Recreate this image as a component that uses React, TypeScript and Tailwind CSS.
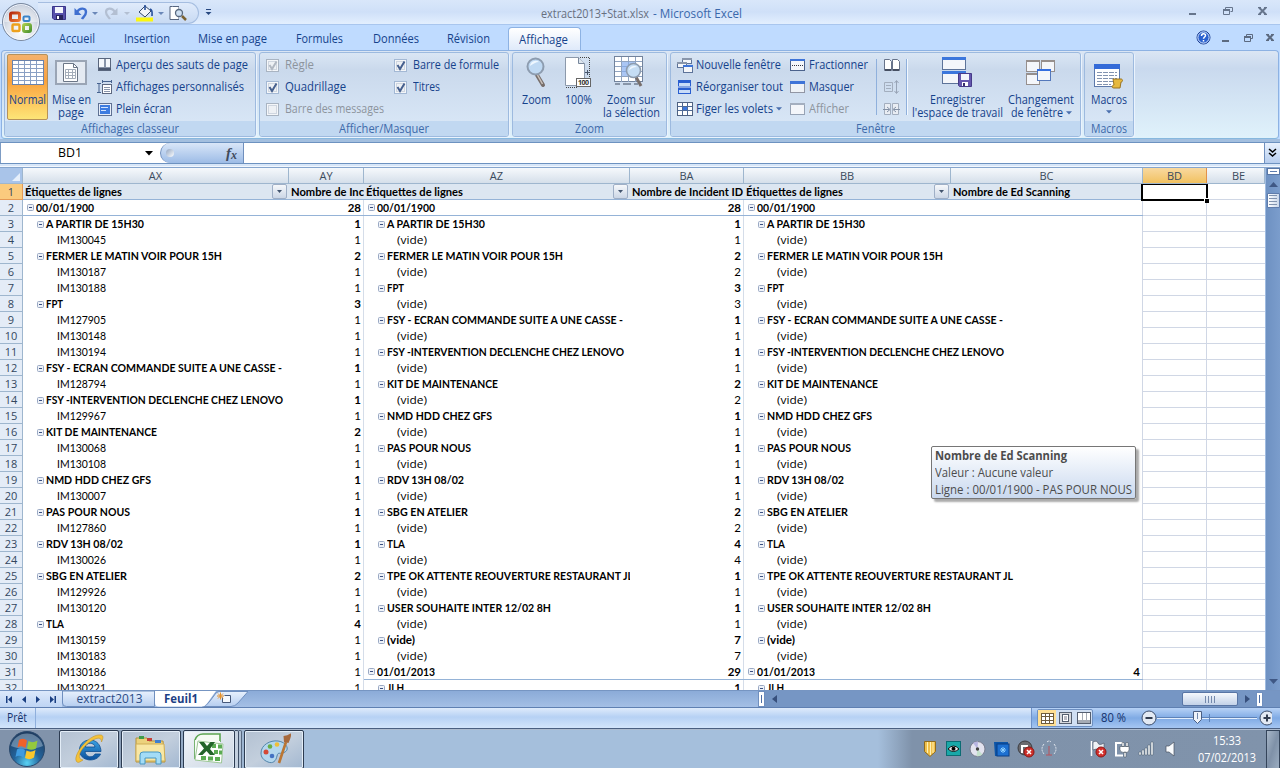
import { useLayoutEffect, useRef, useState } from "react";
import type { ReactNode } from "react";

/* Text set to a given advance width, squeezing or widening the glyphs evenly. */
function Fit({ w, children, className = "" }: { w: number; children: string; className?: string }) {
  const ref = useRef<HTMLSpanElement>(null);
  const [scale, setScale] = useState(1);
  useLayoutEffect(() => {
    if (ref.current && ref.current.offsetWidth) {
      const current = ref.current.getBoundingClientRect().width / scale;
      setScale(w / current);
    }
  }, [w, children]);
  return (
    <span className={"inline-block shrink-0 whitespace-pre " + className} style={{ width: w }}>
      <span ref={ref} className="inline-block origin-left" style={{ transform: `scaleX(${scale})` }}>
        {children}
      </span>
    </span>
  );
}

const Caret = ({ className = "" }: { className?: string }) => (
  <svg width="6" height="4" className={"shrink-0 " + className}>
    <path d="M0 .3h6L3 3.6z" fill="#4a6fae" />
  </svg>
);

function Floppy() {
  return (
    <svg width="14" height="14" viewBox="0 0 14 14">
      <path d="M.5.5h13v13H2L.5 12z" fill="#5650ab" stroke="#39358a" />
      <rect x="3" y="1" width="8" height="6" fill="#f3f5fc" />
      <rect x="4" y="9" width="7" height="5" fill="#27245e" />
      <rect x="5" y="10" width="2" height="3" fill="#fff" />
    </svg>
  );
}

function OfficeOrb() {
  return (
    <svg width="42" height="42" viewBox="0 0 42 42">
      <defs>
        <radialGradient id="orb" cx=".5" cy=".75" r=".75">
          <stop offset="0" stopColor="#ffffff" />
          <stop offset=".5" stopColor="#dfe3ea" />
          <stop offset="1" stopColor="#a3b0c6" />
        </radialGradient>
        <linearGradient id="orbRed" x2="1" y2="1"><stop offset="0" stopColor="#b52a10" /><stop offset="1" stopColor="#ee7a30" /></linearGradient>
        <linearGradient id="orbGreen" x2="1" y2="1"><stop offset="0" stopColor="#a5cb4c" /><stop offset="1" stopColor="#4f9632" /></linearGradient>
      </defs>
      <circle cx="21" cy="21" r="18.500" fill="url(#orb)" stroke="#7a899f" />
      <circle cx="21" cy="21" r="17.300" fill="none" stroke="#f6f9ff" />
      <path d="M4.500 21a16.500 16.500 0 0 1 33 0z" fill="#fff" opacity=".4" />
      <g fill="none" strokeLinejoin="round">
        <rect x="10.500" y="12" width="9" height="7.500" rx="1.500" stroke="url(#orbRed)" strokeWidth="3" />
        <rect x="23.500" y="15.500" width="6" height="4.500" rx="1" stroke="#3a84c9" strokeWidth="2" />
        <rect x="12.500" y="23.500" width="7" height="6.500" rx="1" stroke="#eda11c" strokeWidth="2.400" />
        <rect x="23.500" y="23.500" width="7" height="7" rx="1.500" stroke="url(#orbGreen)" strokeWidth="3" />
      </g>
    </svg>
  );
}

function WinIcons() {
  return (
    <svg width="80" height="13" viewBox="0 0 80 13" className="shrink-0">
      <g stroke="#66758c" fill="none">
        <path d="M1 8h7" strokeWidth="2" />
        <g transform="translate(-1 -1)">
          <path d="M38.500 4.500V2.500h7v4h-2" />
          <path d="M36 5h7" strokeWidth="2" />
          <path d="M36.500 4.500h6v5h-6z" />
        </g>
        <path d="M71 1.500l7 7M78 1.500l-7 7" strokeWidth="2" />
        <path d="M70 1.500h3M76 1.500h3M70 8.500h3M76 8.500h3" />
      </g>
    </svg>
  );
}

function DocIcons() {
  return (
    <svg width="56" height="12" viewBox="0 0 56 12" className="shrink-0">
      <g stroke="#5c6a80" fill="none">
        <path d="M2 9h7" strokeWidth="2" />
        <path d="M26.500 4.500V2.500h6v4h-2" />
        <path d="M24 5h7" strokeWidth="2" />
        <path d="M24.500 4.500h6v5h-6z" />
        <path d="M47 2.500l6 6M53 2.500l-6 6" strokeWidth="2" />
        <path d="M46 2.500h3M51 2.500h3M46 8.500h3M51 8.500h3" />
      </g>
    </svg>
  );
}

function TitleBar() {
  return (
    <div className="flex h-[24px] w-full items-start bg-gradient-to-b from-[#d9e7fa] via-[#cfe0f8] to-[#e3effe]">
      <div className="ml-[38px] mt-[2px] flex h-[22px] w-[161px] items-center rounded-r-full border border-l-0 border-[#a5bde0] bg-gradient-to-b from-[#e0ebfb] to-[#c8daf3] pl-[14px]">
        <Floppy />
        <svg width="106" height="18" viewBox="0 0 106 18" className="ml-[7px]">
          <path d="M4 8c3-5 9-4 9 0s-3 5-4 7" fill="none" stroke="#3f6fd0" strokeWidth="2.400" />
          <path d="M1.500 4v7h7z" fill="#3f6fd0" />
          <path d="M19 8h6l-3 3z" fill="#6a87b8" />
          <path d="M42 8c-3-5-9-4-9 0s3 5 4 7" fill="none" stroke="#b3bfd2" strokeWidth="2.200" />
          <path d="M44.500 4v7h-7z" fill="#b3bfd2" />
          <path d="M51 8h6l-3 3z" fill="#b3bfd2" />
          <rect x="63" y="13.500" width="17" height="4" fill="#fbf70e" />
          <path d="M66 8l6-6 6 5-6 6z" fill="#f2f5fa" stroke="#35496b" />
          <path d="M72 6V1M77 5c3 1 2 4 2 7" fill="none" stroke="#27509b" strokeWidth="1.600" />
          <path d="M85 8h6l-3 3z" fill="#6a87b8" />
          <path d="M99.500 2.500h6.500v13h-9v-13z" fill="#fff" stroke="#56657f" />
        </svg>
        <svg width="14" height="18" viewBox="0 0 14 18" className="-ml-[5px]">
          <circle cx="5" cy="9" r="3.500" fill="#cfe0f2" stroke="#59697f" strokeWidth="1.300" />
          <path d="M8 12l4 4" stroke="#7a6233" strokeWidth="2.500" />
        </svg>
      </div>
      <svg width="7" height="10" className="ml-[6px] mt-[9px]">
        <path d="M1 .5h5" stroke="#274880" />
        <path d="M.5 3h6L3.500 6z" fill="#274880" />
      </svg>
      <div className="ml-[329px] mt-[5px] flex h-[18px] items-center text-[12px] leading-none">
        <Fit w={108} className="text-[#68707f]">extract2013+Stat.xlsx</Fit>
        <Fit w={89} className="ml-[4px] text-[#3a68ab]">- Microsoft Excel</Fit>
      </div>
      <div className="ml-auto mr-[12px] mt-[6px]"><WinIcons /></div>
    </div>
  );
}

const tabs: [string, number, string][] = [
  ["Accueil", 36, "ml-[59px]"],
  ["Insertion", 46, "ml-[29px]"],
  ["Mise en page", 69, "ml-[28px]"],
  ["Formules", 47, "ml-[29px]"],
  ["Données", 46, "ml-[30px]"],
  ["Révision", 43, "ml-[28px]"],
];

function TabBar() {
  return (
    <div className="flex h-[26px] w-full items-start border-t border-[#a9c6ee] bg-[#bfdbff] text-[12px] leading-[28px] text-[#15428b]">
      {tabs.map(([t, w, m]) => (
        <Fit key={t} w={w} className={m}>{t}</Fit>
      ))}
      <div className="ml-[18px] mt-[2px] flex h-[23px] w-[73px] rounded-t-[4px] border border-b-0 border-[#8db2e3] bg-gradient-to-b from-white to-[#dfeafa] pl-[10px] leading-[23px]">
        <Fit w={49}>Affichage</Fit>
      </div>
      <div className="ml-auto mr-[4px] flex items-center pt-[5px]">
        <svg width="15" height="15" viewBox="0 0 15 15" className="mr-[9px]">
          <circle cx="7.500" cy="7.500" r="6.500" fill="#2b61cf" stroke="#1c3f94" />
          <circle cx="7.500" cy="7.500" r="5.600" fill="none" stroke="#d5e5fb" />
          <path d="M5.500 6c0-3 4-3 4-.6 0 1.600-2 1.600-2 3.400M7.500 10v1.500" fill="none" stroke="#fff" strokeWidth="1.500" />
        </svg>
        <DocIcons />
      </div>
    </div>
  );
}

function Group({ label, lw, className, children }: { label: string; lw: number; className: string; children: ReactNode }) {
  return (
    <div className={"flex h-[85px] shrink-0 flex-col overflow-hidden rounded-[3px] border border-[#9dbadf] bg-gradient-to-b from-[#dae6f4] via-[#cad9ec] via-20% to-[#dbe9f8] shadow-[1px_1px_0_#eaf3fd] " + className}>
      <div className="flex h-[68px] shrink-0 items-start">{children}</div>
      <div className="flex h-[15px] items-center justify-center bg-[#c1d8f1] text-[12px] leading-none text-[#3e6aaa]">
        <Fit w={lw}>{label}</Fit>
      </div>
    </div>
  );
}

function Big({ icon, lines, className, caret }: { icon: ReactNode; lines: [string, number][]; className: string; caret?: "inline" | "below" }) {
  return (
    <div className={"mt-[1px] flex h-[66px] shrink-0 flex-col items-center text-[12px] text-[#15428b] " + className}>
      <div className="flex h-[39px] shrink-0 items-center pb-[3px]">{icon}</div>
      {lines.map(([t, w], i) => (
        <div key={t} className="flex h-[13px] shrink-0 items-center leading-[13px]">
          <Fit w={w}>{t}</Fit>
          {caret === "inline" && i === lines.length - 1 && <Caret className="ml-[3px]" />}
        </div>
      ))}
      {caret === "below" && <Caret className="mt-[4px]" />}
    </div>
  );
}

function Small({ icon, label, w, dim, caret }: { icon: ReactNode; label: string; w: number; dim?: boolean; caret?: boolean }) {
  return (
    <div className="flex h-[22px] items-center text-[12px] leading-none">
      {icon}
      <Fit w={w} className={dim ? "text-[#8d949d]" : "text-[#15428b]"}>{label}</Fit>
      {caret && <Caret className="ml-[3px]" />}
    </div>
  );
}

function Check({ label, w, on, dim }: { label: string; w: number; on?: boolean; dim?: boolean }) {
  return (
    <Small
      label={label}
      w={w}
      dim={dim}
      icon={
        <svg width="13" height="13" className="mr-[6px] shrink-0">
          <rect x=".5" y=".5" width="12" height="12" fill="#f4f6f9" stroke={dim ? "#a9b4c2" : "#a3b8d4"} />
          <rect x="2.500" y="2.500" width="8" height="8" fill="#eef1f5" stroke="#cfd6e0" />
          {on && <path d="M3.500 6l2.500 4 4.500-7.500" fill="none" stroke={dim ? "#b1b8c2" : "#46608f"} strokeWidth="2" />}
        </svg>
      }
    />
  );
}

function NormalIcon() {
  return (
    <svg width="32" height="25">
      <rect x=".5" y=".5" width="31" height="24" fill="#fff" stroke="#6a83ad" />
      <path d="M1 4.500h30M1 8.500h30M1 12.500h30M1 16.500h30M1 20.500h30M6.500 1v23M12.500 1v23M18.500 1v23M24.500 1v23" stroke="#8aa0c4" />
    </svg>
  );
}

function PageLayoutIcon() {
  return (
    <svg width="32" height="25">
      <rect x="1" y="1" width="30" height="23" fill="#e4eaf2" stroke="#9aa5b5" strokeWidth="2" />
      <path d="M8.500 3.500h10l4 4v14h-14z" fill="#fff" stroke="#6b7686" />
      <path d="M18.500 3.500v4h4" fill="none" stroke="#6b7686" />
      <path d="M10.500 9.500h10v9h-10zM10 12.500h11M10 15.500h11M13.500 9v9M17.500 9v9" fill="none" stroke="#a4adb9" />
    </svg>
  );
}

function ZoomIcon() {
  return (
    <svg width="20" height="31">
      <path d="M11 18l6 10" stroke="#776e6b" strokeWidth="4" strokeLinecap="round" />
      <path d="M11.500 18l5 9" stroke="#cbc3bd" strokeWidth="1.500" />
      <circle cx="9.500" cy="9.500" r="8" fill="#bfd9f3" stroke="#8d9caf" strokeWidth="2" />
      <path d="M4 9a5.500 5.500 0 0 1 9-4c-3 0-6 2-9 4z" fill="#eef7ff" />
    </svg>
  );
}

function HundredIcon() {
  return (
    <svg width="26" height="31" viewBox="0 0 26 31">
      <path d="M.5.5h13l6 6v22H.5z" fill="#fff" stroke="#8c99ab" />
      <path d="M13.500.5v6h6" fill="#dde5ee" stroke="#77869b" />
      <path d="M15 .5h9.500V21M1 30.500h11" fill="none" stroke="#444" strokeDasharray="1 1" />
      <path d="M20 15.500h5M22.500 13v5" stroke="#4a566a" />
      <rect x="11.500" y="21.500" width="14" height="8" fill="#fff" stroke="#666" />
      <text x="13" y="28.300" fontSize="7" fontWeight="700" textLength="11" fill="#333">100</text>
    </svg>
  );
}

function ZoomSelIcon() {
  return (
    <svg width="30" height="32" viewBox="0 0 30 32">
      <rect x=".5" y=".5" width="28" height="25" fill="#fff" stroke="#72839c" />
      <path d="M1 5.500h27M1 10.500h27M1 15.500h27M1 20.500h27M7.500 1v25M14.500 1v25M21.500 1v25" stroke="#8fa3c0" />
      <rect x="8" y="6" width="13" height="14" fill="#86aef0" opacity=".7" />
      <path d="M1 28h5M9 28h8M20 28h4" stroke="#8895a8" strokeWidth="2" />
      <path d="M22 21l5 9" stroke="#776e6b" strokeWidth="3" />
      <circle cx="19.500" cy="14.500" r="7" fill="#c5ddf4" stroke="#8d9caf" strokeWidth="1.600" />
      <path d="M15 14a5 5 0 0 1 8-3c-3 0-5 1-8 3z" fill="#f1f8ff" />
    </svg>
  );
}

/* One small framed window with a coloured caption. */
const Win = ({ x, y, w, h, c = "#3e74d8", f = "#f4f6fa", s = "#5d7399" }: { x: number; y: number; w: number; h: number; c?: string; f?: string; s?: string }) => (
  <g>
    <rect x={x + 0.5} y={y + 0.5} width={w - 1} height={h - 1} fill={f} stroke={s} />
    <rect x={x} y={y} width={w} height={Math.max(2, Math.round(h / 5))} fill={c} />
  </g>
);

function Ribbon() {
  return (
    <div className="flex h-[89px] w-full items-start bg-[#bfdbff] px-[1px]">
      <div className="flex h-[89px] w-full items-start rounded-[4px] border border-[#8db2e3] border-b-[#87b8de] bg-gradient-to-b from-[#dbe6f4] via-[#c9d9ee] via-20% to-[#e0f2fb] pl-[2px] pt-[1px]">
        <Group label="Affichages classeur" lw={98} className="w-[252px]">
          <Big
            className="ml-[2px] w-[41px] rounded-[2px] border border-[#b6915a] bg-gradient-to-b from-[#f3b16c] via-[#f9a13c] via-40% to-[#fde577] [&>div:first-child]:h-[38px]"
            icon={<NormalIcon />}
            lines={[["Normal", 37]]}
          />
          <Big className="ml-[2px] w-[42px]" icon={<PageLayoutIcon />} lines={[["Mise en", 39], ["page", 26]]} />
          <div className="ml-[6px] mt-[1px]">
            <Small w={132} label="Aperçu des sauts de page" icon={
              <svg width="14" height="14" className="mr-[4px]">
                <rect x=".5" y=".5" width="12" height="12" fill="#8894a8" stroke="#59667d" />
                <path d="M1 1h5v8H1zM8 1h4v8H8z" fill="#f4f7fb" />
                <path d="M1 11h12" stroke="#4c5971" strokeWidth="2" />
              </svg>} />
            <Small w={128} label="Affichages personnalisés" icon={
              <svg width="16" height="15" className="-ml-[1px] mr-[3px]">
                <path d="M0 3.500h4M0 12.500h4M2 3v10M5 1.500h10M5.500 0v3M14.500 0v3" stroke="#47638f" />
                <rect x="5.500" y="4.500" width="9" height="9" fill="#fff" stroke="#5d6880" />
                <path d="M7 7.500h6M7 9.500h6M7 11.500h6" stroke="#8894aa" />
              </svg>} />
            <Small w={56} label="Plein écran" icon={
              <svg width="14" height="13" className="mr-[4px]">
                <rect x=".5" y=".5" width="13" height="12" fill="#e8effa" stroke="#5f7193" />
                <rect x="2" y="2" width="10" height="9" fill="#3d7ce0" />
                <path d="M3 4.500h7M3 7.500h5" stroke="#d2e4ff" />
              </svg>} />
          </div>
        </Group>

        <Group label="Afficher/Masquer" lw={90} className="ml-[3px] w-[250px]">
          <div className="ml-[6px] mt-[1px] w-[128px]">
            <Check label="Règle" w={29} on dim />
            <Check label="Quadrillage" w={61} on />
            <Check label="Barre des messages" w={99} dim />
          </div>
          <div className="mt-[1px]">
            <Check label="Barre de formule" w={86} on />
            <Check label="Titres" w={27} on />
          </div>
        </Group>

        <Group label="Zoom" lw={29} className="ml-[3px] w-[155px]">
          <Big className="ml-[4px] w-[38px]" icon={<ZoomIcon />} lines={[["Zoom", 29]]} />
          <Big className="ml-[4px] w-[38px]" icon={<HundredIcon />} lines={[["100%", 27]]} />
          <Big className="ml-[4px] w-[60px] [&>div:first-child]:-ml-[4px]" icon={<ZoomSelIcon />} lines={[["Zoom sur", 48], ["la sélection", 57]]} />
        </Group>

        <Group label="Fenêtre" lw={39} className="ml-[3px] w-[411px]">
          <div className="ml-[6px] mt-[1px] w-[113px]">
            <Small w={85} label="Nouvelle fenêtre" icon={
              <svg width="16" height="15" className="mr-[3px]">
                <Win x={5} y={0} w={10} h={6} c="#8996ab" />
                <Win x={0} y={4} w={10} h={6} c="#8996ab" />
                <Win x={6} y={7} w={10} h={8} />
              </svg>} />
            <Small w={87} label="Réorganiser tout" icon={
              <svg width="14" height="14" className="ml-[1px] mr-[4px]">
                <rect width="13" height="14" fill="#2a5ed0" />
                <path d="M1 3h11v3H1zM1 10h11v3H1z" fill="#c9dcf8" />
                <path d="M0 7h13" stroke="#dfe9f7" />
              </svg>} />
            <Small w={77} label="Figer les volets" caret icon={
              <svg width="16" height="14" className="mr-[3px]">
                <rect x=".5" y=".5" width="15" height="13" fill="#fff" stroke="#4f6282" />
                <path d="M1 4.500h14M1 8.500h14M5.500 1v12M10.500 1v12" stroke="#4f6a96" />
                <path d="M6 5h4v3H6z" fill="#3a76dc" />
              </svg>} />
          </div>
          <div className="mt-[1px] w-[86px]">
            <Small w={59} label="Fractionner" icon={
              <svg width="15" height="12" className="mr-[4px]"><Win x={0} y={0} w={15} h={12} s="#4b628c" /><path d="M2 6.500h11" stroke="#334" strokeDasharray="1 1" /></svg>} />
            <Small w={45} label="Masquer" icon={
              <svg width="15" height="12" className="mr-[4px]"><rect x=".5" y=".5" width="14" height="11" fill="#eef2f7" stroke="#445" strokeDasharray="1 1" /><path d="M0 1.500h15" stroke="#3e74d8" strokeWidth="3" /></svg>} />
            <Small w={40} dim label="Afficher" icon={
              <svg width="15" height="12" className="mr-[4px]"><Win x={0} y={0} w={15} h={12} c="#a4afbf" s="#97a3b5" /></svg>} />
          </div>
          <div className="mt-[6px] flex h-[56px] w-[31px] justify-center border-x border-[#8fb0dc] shadow-[1px_0_0_#f2f8ff]">
            <svg width="17" height="56">
              <path d="M1.500.5h5l2 2v9h-7zM9.500.5h5l2 2v9h-7z" fill="#fff" stroke="#67738a" />
              <path d="M2 11h6M10 11h6" stroke="#464f62" strokeWidth="2" />
              <path d="M1.500 23.500h8v9h-8zM3 26.500h5M3 29.500h5" fill="none" stroke="#a3aebe" />
              <path d="M13.500 22v12M11.500 24l2-2.500 2 2.500M11.500 32l2 2.500 2-2.500" fill="none" stroke="#98a4b6" />
              <path d="M1.500 44.500h6v11h-6zM9.500 44.500h6v11h-6z" fill="#e9edf3" stroke="#a3aebe" />
              <path d="M0 50.500h6M4 48l3 2.500L4 53M17 50.500h-6M13 48l-3 2.500 3 2.500" fill="none" stroke="#8391a6" />
            </svg>
          </div>
          <Big className="ml-[2px] w-[96px]" lines={[["Enregistrer", 55], ["l'espace de travail", 91]]} icon={
            <svg width="30" height="31">
              <Win x={0} y={0} w={24} h={13} c="#3c77dc" />
              <Win x={0} y={14} w={24} h={13} c="#3c77dc" />
              <path d="M16.500 16.500h13v13h-12l-1-1z" fill="#6557ae" stroke="#463a88" />
              <path d="M19 17h8v6h-8z" fill="#f2f4fb" />
              <path d="M20 25h6v4h-6z" fill="#fff" /><path d="M21 26h2v3h-2z" fill="#39306f" />
            </svg>} />
          <Big className="w-[72px] [&>div:first-child]:pb-0" caret="inline" lines={[["Changement", 66], ["de fenêtre", 52]]} icon={
            <svg width="30" height="27">
              <Win x={0} y={0} w={14} h={12} c="#968f8d" s="#968f8d" />
              <Win x={15} y={0} w={14} h={12} c="#968f8d" s="#968f8d" />
              <Win x={0} y={13} w={14} h={12} c="#968f8d" s="#968f8d" />
              <Win x={11} y={9} w={14} h={12} c="#356fe0" s="#5478bb" />
            </svg>} />
        </Group>

        <Group label="Macros" lw={36} className="ml-[3px] w-[50px]">
          <Big className="w-[48px] [&>div:first-child]:pb-0 [&>div:first-child]:pt-[6px]" caret="below" lines={[["Macros", 36]]} icon={
            <svg width="30" height="26">
              <rect x=".5" y=".5" width="25" height="22" fill="#fff" stroke="#5c79ab" />
              <rect width="26" height="5" fill="#346bd8" />
              <path d="M3 8.500h20M3 11.500h20M3 14.500h20M3 17.500h20M3 20.500h14" stroke="#8293b0" strokeDasharray="5 1" />
              <path d="M19 15h8c2 0 2 3 0 3l-1 6h-6c-3 0-2-3 0-3z" fill="#e6b93e" stroke="#9b7420" />
            </svg>} />
        </Group>
      </div>
    </div>
  );
}

function FormulaBar() {
  return (
    <div className="flex h-[29px] w-full flex-col border-t-[3px] border-[#a3bfdf] bg-[#d7e6f8]">
      <div className="flex h-[22px] w-full items-stretch border-y border-[#6d92c0] bg-white">
        <div className="flex w-[160px] items-center border-l border-[#7d9cc4] bg-white pl-[57px] text-[12px] text-black">
          <Fit w={24}>BD1</Fit>
          <svg width="8" height="5" className="ml-[63px]"><path d="M0 0h8L4 4.500z" fill="#000" /></svg>
        </div>
        <div className="flex w-[84px] items-center rounded-l-full border border-y-0 border-[#6f8fbd] bg-gradient-to-b from-[#d9e6f8] to-[#9dbce6] pl-[5px]">
          <span className="h-[8px] w-[8px] rounded-full bg-gradient-to-br from-[#93a6c2] to-white" />
          <span className="ml-[52px] font-['Liberation_Serif'] text-[15px] font-bold italic leading-none text-[#414b5c]">f</span>
          <span className="mt-[3px] font-['Liberation_Serif'] text-[12px] font-bold italic leading-none text-[#414b5c]">x</span>
        </div>
        <div className="flex-1" />
        <div className="flex w-[16px] items-center justify-center border-l border-[#6f8fbd] bg-gradient-to-b from-[#e9f2fe] to-[#b6cdee]">
          <svg width="9" height="10"><path d="M1 1l3.500 3L8 1M1 5l3.500 3L8 5" fill="none" stroke="#000" strokeWidth="1.500" /></svg>
        </div>
      </div>
      <div className="h-[2px]" />
      <div className="h-px bg-[#f2f7fd]" />
      <div className="h-px bg-[#86a5cd]" />
    </div>
  );
}

type Line = { level: 0 | 1 | 2; text: string; n?: number };
const W: Record<string, number> = {
  "00/01/1900": 58, "01/01/2013": 58, "A PARTIR DE 15H30": 98, "FERMER LE MATIN VOIR POUR 15H": 176, FPT: 17,
  "FSY - ECRAN COMMANDE SUITE A UNE CASSE -": 236, "FSY -INTERVENTION DECLENCHE CHEZ LENOVO": 237,
  "KIT DE MAINTENANCE": 111, "NMD HDD CHEZ GFS": 105, "PAS POUR NOUS": 84, "RDV 13H 08/02": 77,
  "SBG EN ATELIER": 81, TLA: 18, "TPE OK ATTENTE REOUVERTURE RESTAURANT JL": 246,
  "USER SOUHAITE INTER 12/02 8H": 164, JLH: 17,
};

const g = (text: string, n?: number): Line => ({ level: 1, text, n });
const i = (text: string, n?: number): Line => ({ level: 2, text, n });

const left: Line[] = [
  { level: 0, text: "00/01/1900", n: 28 },
  g("A PARTIR DE 15H30", 1), i("IM130045", 1),
  g("FERMER LE MATIN VOIR POUR 15H", 2), i("IM130187", 1), i("IM130188", 1),
  g("FPT", 3), i("IM127905", 1), i("IM130148", 1), i("IM130194", 1),
  g("FSY - ECRAN COMMANDE SUITE A UNE CASSE -", 1), i("IM128794", 1),
  g("FSY -INTERVENTION DECLENCHE CHEZ LENOVO", 1), i("IM129967", 1),
  g("KIT DE MAINTENANCE", 2), i("IM130068", 1), i("IM130108", 1),
  g("NMD HDD CHEZ GFS", 1), i("IM130007", 1),
  g("PAS POUR NOUS", 1), i("IM127860", 1),
  g("RDV 13H 08/02", 1), i("IM130026", 1),
  g("SBG EN ATELIER", 2), i("IM129926", 1), i("IM130120", 1),
  g("TLA", 4), i("IM130159", 1), i("IM130183", 1), i("IM130186", 1), i("IM130221", 1),
];

const groups: [string, number][] = [
  ["A PARTIR DE 15H30", 1], ["FERMER LE MATIN VOIR POUR 15H", 2], ["FPT", 3],
  ["FSY - ECRAN COMMANDE SUITE A UNE CASSE -", 1], ["FSY -INTERVENTION DECLENCHE CHEZ LENOVO", 1],
  ["KIT DE MAINTENANCE", 2], ["NMD HDD CHEZ GFS", 1], ["PAS POUR NOUS", 1], ["RDV 13H 08/02", 1],
  ["SBG EN ATELIER", 2], ["TLA", 4], ["TPE OK ATTENTE REOUVERTURE RESTAURANT JL", 1],
  ["USER SOUHAITE INTER 12/02 8H", 1], ["(vide)", 7],
];

const middle: Line[] = [
  { level: 0, text: "00/01/1900", n: 28 },
  ...groups.flatMap(([t, n]) => [g(t, n), i("(vide)", n)]),
  { level: 0, text: "01/01/2013", n: 29 },
  g("JLH", 1),
];

const right: Line[] = middle.map((l) => ({ ...l, n: l.text === "01/01/2013" ? 4 : undefined }));

const widthOf = (l: Line) => (l.text === "(vide)" ? (l.level === 2 ? 30 : 28) : (W[l.text] ?? 49));

function Minus() {
  return (
    <svg width="7" height="7" className="mr-[2px] shrink-0">
      <rect x=".5" y=".5" width="6" height="6" rx="1" fill="#eef2f8" stroke="#9aa9c4" />
      <path d="M2 3.500h3" stroke="#3a4f80" />
    </svg>
  );
}

function Pivot({ lines, count, labelW, valueW, countW, edge, spill }: { lines: Line[]; count: string; labelW: string; valueW: string; countW: number; edge: string; spill?: boolean }) {
  return (
    <div className="flex shrink-0 flex-col">
      <div className="flex h-[16px] border-b border-[#95b3d7] bg-[#dce6f1] font-bold">
        <div className={"flex items-center overflow-hidden pl-[2px] " + labelW}>
          <Fit w={97}>Étiquettes de lignes</Fit>
          <span className="ml-auto mr-[2px] flex h-[15px] w-[15px] shrink-0 items-center justify-center rounded-[2px] border border-[#9fafc6] bg-gradient-to-b from-[#f6f8fb] to-[#ccd7e6]">
            <svg width="5" height="3"><path d="M0 0h5L2.500 3z" fill="#42546e" /></svg>
          </span>
        </div>
        <div className={"flex items-center overflow-hidden pl-[2px] " + valueW}>
          <Fit w={countW}>{count}</Fit>
        </div>
      </div>
      {lines.map((l, k) => (
        <div key={k} className={"flex h-[16px] shrink-0 " + (l.level === 0 ? "border-b border-[#95b3d7] " : "") + (l.level < 2 ? "font-bold" : "")}>
          <div className={"flex items-center " + (spill ? "" : "overflow-hidden ") + labelW + (l.level === 0 ? " pl-[4px]" : l.level === 1 ? " pl-[14px]" : l.text === "(vide)" ? " pl-[33px]" : " pl-[34px]")}>
            {l.level < 2 && <Minus />}
            <Fit w={widthOf(l)} className={l.text === "(vide)" && l.level === 2 ? "font-['Open_Sans'] text-[11px]" : ""}>{l.text}</Fit>
          </div>
          <div className={"flex items-center justify-end pr-[2px] " + valueW + " " + edge}>{l.n}</div>
        </div>
      ))}
    </div>
  );
}

const heads: [string, string][] = [
  ["AX", "w-[266px]"], ["AY", "w-[75px]"], ["AZ", "w-[266px]"], ["BA", "w-[114px]"],
  ["BB", "w-[207px]"], ["BC", "w-[192px]"], ["BD", "w-[64px]"], ["BE", "w-[58px]"],
];

function Sheet() {
  return (
    <div className="flex h-[522px] w-full overflow-hidden bg-white">
      <div className="flex w-[1265px] shrink-0 flex-col overflow-hidden">
        <div className="flex h-[16px] shrink-0 border-b border-[#9eb6ce] text-[11px] leading-[15px] text-[#3b4a5c]">
          <div className="flex w-[23px] items-end justify-end border-r border-[#9eb6ce] bg-[#a9c4e9] p-[2px]">
            <svg width="8" height="8"><path d="M8 0v8H0z" fill="#e6effb" /></svg>
          </div>
          {heads.map(([h, w]) => (
            <div key={h} className={"border-r text-center " + w + (h === "BD" ? " border-[#e2914a] bg-gradient-to-b from-[#f9d99f] to-[#f1c15f]" : h === "BE" ? " border-[#9eb6ce] bg-gradient-to-b from-[#f6f9fc] to-[#d5dfea] pl-[6px]" : " border-[#9eb6ce] bg-gradient-to-b from-[#f6f9fc] to-[#d5dfea]")}>{h}</div>
          ))}
        </div>
        <div className="flex h-[506px] shrink-0 overflow-hidden font-['Lato'] text-[11.500px] leading-[16px] text-black">
          <div className="w-[23px] shrink-0 font-['Open_Sans'] text-[11px] text-[#33475e]">
            {Array.from({ length: 32 }, (_, k) => (
              <div key={k} className={"h-[16px] border-b border-r text-center leading-[15px] " + (k === 0 ? "border-[#e59a55] bg-[#fbcb7e]" : "border-[#9eb6ce] bg-[#e4ecf7]")}>{k + 1}</div>
            ))}
          </div>
          <Pivot lines={left} count="Nombre de Incident ID" countW={113} labelW="w-[266px]" valueW="w-[75px]" edge="border-r border-[#d5dde9]" />
          <Pivot lines={middle} count="Nombre de Incident ID" countW={111} labelW="w-[266px]" valueW="w-[114px]" edge="border-r border-[#d5dde9]" />
          <Pivot lines={right} count="Nombre de Ed Scanning" countW={117} labelW="w-[207px]" valueW="w-[192px]" edge="border-r border-[#d0d7e5]" spill />
          <div className="w-[122px] shrink-0">
            {Array.from({ length: 32 }, (_, k) => (
              <div key={k} className="flex h-[16px]">
                {k === 0 ? (
                  <div className="relative z-10 -ml-[2px] -mt-px h-[18px] w-[67px] shrink-0 border-2 border-black">
                    <span className="absolute -bottom-[4px] -right-[3px] h-[5px] w-[5px] border-l border-t border-white bg-black" />
                  </div>
                ) : (
                  <div className="w-[64px] border-b border-r border-[#d0d7e5]" />
                )}
                <div className="flex-1 border-b border-[#d0d7e5]" />
              </div>
            ))}
          </div>
        </div>
      </div>
      <div className="flex w-[15px] flex-col items-center border-l border-[#9fbbe0] bg-gradient-to-r from-[#6e91c2] to-[#7b9dcc]">
        <div className="flex h-[7px] w-[13px] items-center border border-[#5876a5] bg-white px-[2px]"><span className="h-px w-full bg-[#5e7daf]" /></div>
        <svg width="9" height="5" className="mt-[7px]"><path d="M0 5h9L4.500 0z" fill="#3f5885" /></svg>
        <div className="mt-[6px] flex h-[15px] w-[13px] flex-col items-center justify-center gap-px rounded-[1px] border border-[#5f7cab] bg-gradient-to-r from-white to-[#cbd8ea]">
          {[0, 1, 2, 3].map((k) => <span key={k} className="mb-px h-px w-[8px] bg-[#8193ae]" />)}
        </div>
        <svg width="9" height="5" className="mb-[6px] mt-auto"><path d="M0 0h9L4.500 5z" fill="#3f5885" /></svg>
      </div>
    </div>
  );
}

function SheetTabs() {
  return (
    <div className="flex h-[17px] w-full border-t border-[#7695c2] bg-gradient-to-b from-[#8babd8] to-[#a4bfe5]">
      <div className="flex w-[62px] items-center bg-gradient-to-b from-[#dce9fb] to-[#bed4f3]">
        <svg width="62" height="9" fill="#1a3f82">
          <path d="M6 1h1.500v7H6zM12 1v7L8 4.500zM26 1v7l-4-3.500zM36 1v7l4-3.500zM50 1v7l4-3.500zM54.500 1H56v7h-1.500z" />
        </svg>
      </div>
      <svg width="186" height="16" viewBox="0 0 186 16" className="shrink-0">
        <defs>
          <linearGradient id="stab" x2="0" y2="1"><stop offset="0" stopColor="#e8f1fd" /><stop offset="1" stopColor="#b6cef0" /></linearGradient>
        </defs>
        <path d="M140 15.500Q145 15 148 10L154 2Q156 .5 158 .5h28L176 12q-3 3.500-7 3.500z" fill="url(#stab)" stroke="#6f8fbf" />
        <path d="M.500 0V12q0 3.500 4 3.500H92.500V0z" fill="url(#stab)" stroke="#6f8fbf" />
        <path d="M93 0v12q0 3.500 4 3.500h43q3 0 5-3L154 0z" fill="#fff" />
        <path d="M162.500 4.500h6v7h-8v-5" fill="#f6f9fd" stroke="#46597a" />
        <path d="M155 5h7M158.500 1.500v7M156 2.500l5 5M161 2.500l-5 5" stroke="#e79128" />
        <text x="14.500" y="12.300" fontSize="12.500" textLength="66" lengthAdjust="spacingAndGlyphs" fill="#2c4c86">extract2013</text>
        <text x="102" y="12.300" fontSize="12.500" fontWeight="700" textLength="34" lengthAdjust="spacingAndGlyphs" fill="#1c3f84">Feuil1</text>
      </svg>
      <div className="ml-[510px] flex h-[16px] w-[7px] items-center justify-center border border-[#6f8fbf] bg-white"><span className="h-[8px] w-px bg-[#4e6ea5]" /></div>
      <div className="flex flex-1 items-center bg-[#7696c4]">
        <svg width="5" height="8" className="ml-[7px]"><path d="M5 0v8L0 4z" fill="#374f7c" /></svg>
        <div className="ml-[405px] flex h-[14px] w-[56px] items-center justify-center gap-[1px] rounded-[2px] border border-[#5875a5] bg-gradient-to-b from-[#f5f8fd] to-[#c3d2e8]">
          {[0, 1, 2, 3].map((k) => <span key={k} className="mr-px h-[7px] w-px bg-[#7489ac]" />)}
        </div>
        <svg width="5" height="8" className="ml-[7px]"><path d="M0 0v8l5-4z" fill="#374f7c" /></svg>
        <div className="ml-[6px] flex h-[15px] w-[7px] items-center justify-center border border-[#6f8fbf] bg-white"><span className="h-[8px] w-px bg-[#4e6ea5]" /></div>
      </div>
    </div>
  );
}

function StatusBar() {
  return (
    <div className="flex h-[22px] w-full items-stretch border-y border-b-[#4a5f80] border-t-[#5f80b2] bg-gradient-to-b from-[#dfebfb] via-[#b6d1f4] via-45% to-[#d3e5fb] text-[12px] leading-none text-[#15326c]">
      <div className="flex w-[36px] items-center border-r border-[#8fafdc] pl-[7px]"><Fit w={20}>Prêt</Fit></div>
      <div className="flex-1" />
      <div className="flex w-[249px] items-center border-l border-[#6f92c8] bg-gradient-to-b from-[#b7d2f6] via-[#7faae4] via-50% to-[#a5c6f2]">
        <div className="ml-[5px] flex h-[18px] w-[56px] items-center rounded-[2px] border border-[#6d8fc1] bg-[#d0dff3]">
          <div className="flex h-full w-[18px] items-center justify-center bg-[#ffdf93]">
            <svg width="13" height="11"><rect x=".5" y=".5" width="12" height="10" fill="#fff" stroke="#6e5c3d" /><path d="M1 3.500h11M1 7.500h11M4.500 1v9M8.500 1v9" stroke="#6e5c3d" /></svg>
          </div>
          <svg width="13" height="12" className="ml-[3px]"><rect x=".5" y=".5" width="12" height="11" fill="#d7d9de" stroke="#555f70" /><rect x="3.500" y="2.500" width="6" height="7" fill="#fff" stroke="#555f70" /><path d="M5 5h3M5 7h3" stroke="#778" /></svg>
          <svg width="14" height="12" className="ml-[5px]"><rect x=".5" y=".5" width="13" height="11" fill="#a5abb5" stroke="#555f70" /><path d="M1 1h4v7H1zM6 1h3v7H6zM10 1h3v7h-3z" fill="#fff" /></svg>
        </div>
        <Fit w={25} className="ml-[8px]">80 %</Fit>
        <svg width="134" height="18" viewBox="0 0 134 18" className="ml-[12px]">
          <path d="M19 9.500h100" stroke="#e3eefc" /><path d="M19 8.500h100M71.500 5v8" stroke="#5d82b8" />
          <circle cx="11" cy="9" r="7" fill="#e2e9f3" stroke="#3c4e6c" /><path d="M7.500 9h7" stroke="#323d50" strokeWidth="2" />
          <circle cx="129" cy="9" r="7" fill="#e2e9f3" stroke="#3c4e6c" /><path d="M125.500 9h7M129 5.500v7" stroke="#323d50" strokeWidth="2" />
          <path d="M55.500 2.500h8v8l-4 4-4-4z" fill="#eef3fa" stroke="#4a5f83" /><path d="M59.500 4v6" stroke="#7188ad" />
        </svg>
      </div>
    </div>
  );
}

function TaskButton({ children, className = "", active }: { children: ReactNode; className?: string; active?: boolean }) {
  return (
    <div className={"flex h-[39px] shrink-0 items-center justify-center rounded-[2px] border border-[#2c3b51] shadow-[inset_0_0_0_1px_#e3edf7] " + (active ? "bg-gradient-to-br from-[#f2f5f9] to-[#cbd6e3] " : "bg-gradient-to-br from-[#b3c1d2] via-[#c3cfdd] to-[#a3b8d1] ") + className}>
      {children}
    </div>
  );
}

function Taskbar() {
  return (
    <div className="flex h-[39px] w-full items-center border-t border-[#aebccf] bg-[linear-gradient(90deg,#8193ab_0,#8193ab_58px,#a5bfdc_300px,#a5bfdc_878px,#7f92aa_912px,#8093ab_100%)]">
      <svg width="40" height="38" viewBox="0 0 40 38" className="ml-[7px] shrink-0">
        <defs>
          <radialGradient id="start" cx=".5" cy=".9" r=".85"><stop offset="0" stopColor="#59d2f4" /><stop offset=".45" stopColor="#23639b" /><stop offset="1" stopColor="#1f3e63" /></radialGradient>
        </defs>
        <circle cx="20" cy="19" r="17.500" fill="url(#start)" stroke="#29486c" />
        <path d="M4 16a16.500 16.500 0 0 1 32 0c-9 4-23 4-32 0z" fill="#c8dcea" opacity=".4" />
        <path d="M12 10q4.500-2.500 8 .5L18.500 18q-4-3-8-.5z" fill="#f0622a" />
        <path d="M21.500 11q4 2.500 9-.5L29 18.500q-5 2.500-9 0z" fill="#94c93d" />
        <path d="M10 19.500q4-2.500 8 .5l-1.500 7.500q-4-3-8-.5z" fill="#3f9be0" />
        <path d="M19.500 20.500q4 2.500 9-.5L27 27.500q-4.500 3-9 .5z" fill="#fbc72c" />
      </svg>
      <TaskButton className="ml-[12px] w-[60px]">
        <svg width="34" height="34" viewBox="0 0 34 34">
          <defs><linearGradient id="ie" x2="0" y2="1"><stop offset="0" stopColor="#3aa3e3" /><stop offset="1" stopColor="#0b4f9c" /></linearGradient></defs>
          <path d="M29 19.500H13c.5 6 8 7 10 2.500h5.500C25 31 7 30 7.500 17.500 8 5 28.500 4 29 19.500zM13.300 15H23c-.8-5-8.700-5-9.700 0z" fill="url(#ie)" fillRule="evenodd" stroke="#0d4d90" strokeWidth=".8" />
          <path d="M5 30C-1 25 17 1 29 3c3 .5 2 4 .5 7 0-5-4-5-11-.5S2 26 11 28c-3 2-4.500 3-6 2z" fill="#f4c23a" stroke="#bb8a1f" strokeWidth=".5" />
        </svg>
      </TaskButton>
      <TaskButton className="ml-[2px] w-[60px]">
        <svg width="34" height="32" viewBox="0 0 34 32">
          <path d="M2 5h11l2 3h14l2 21H2z" fill="#ecd27c" stroke="#b3913b" />
          <path d="M5 3h5v3H5z" fill="#3e9c4a" /><path d="M13 5h5v3h-5z" fill="#c53f36" /><path d="M21 7h6v3h-6z" fill="#3f7fd0" />
          <path d="M2 11h28l1 17H2z" fill="#f8e7a4" stroke="#cfae57" />
          <path d="M6 31V22q0-3 3-3h15q3 0 3 3v9h-5v-6H11v6z" fill="#a3dcf6" stroke="#4796c2" />
        </svg>
      </TaskButton>
      <TaskButton active className="ml-[2px] w-[52px]">
        <svg width="33" height="34" viewBox="0 0 33 34">
          <path d="M2 27V8q2-6 8-6h17v8" fill="#f5fbf3" stroke="#5ca552" strokeWidth="1.600" />
          <path d="M2 8q9 1 25 1v17L2 28z" fill="#f7fbf6" />
          <path d="M5 9l25 3-1.500 19L2 28z" fill="#fdfefd" stroke="#9dc795" />
          <path d="M19 12h4v4h-4zM25 12.500h4v4h-4zM21 18h4v4h-4zM26 18.500h3v4h-3zM8 24h5v4H8zM15 24.500h5v4h-5zM22 25h5v4h-5z" fill="#5bab53" />
          <path d="M6 10h5l3 4 3.500-4H22l-5 7 5 6h-5l-3.500-4-4 4H5l6-6.500z" fill="#226329" />
        </svg>
      </TaskButton>
      <div className="h-[39px] w-[4px] rounded-r-[2px] border border-l-0 border-[#3d4e66] bg-[#c3d0df]" />
      <div className="h-[39px] w-[4px] rounded-r-[2px] border border-l-0 border-[#56677f] bg-[#b3c4d8]" />
      <TaskButton className="ml-[2px] w-[60px]">
        <svg width="33" height="34" viewBox="0 0 33 34">
          <path d="M3 21c0-8 9-13 17-12s12 8 7 11-7-1-8 4-4 8-9 6-7-5-7-9z" fill="#b4d7ee" stroke="#5184aa" />
          <circle cx="8" cy="20" r="2.500" fill="#d44936" /><circle cx="12" cy="14.500" r="2.300" fill="#68ae45" /><circle cx="19" cy="12.500" r="2.300" fill="#efbf38" /><circle cx="14" cy="24" r="2.300" fill="#4472c2" />
          <path d="M21 31L28 10" stroke="#ba7634" strokeWidth="2.600" /><path d="M26 10l-.5-6q4 0 8-3-.5 5-3 10z" fill="#a7693c" />
        </svg>
      </TaskButton>
      <svg width="270" height="24" viewBox="0 0 270 24" className="ml-[613px] shrink-0">
        <path d="M7.500 4.500h11v10L13 19.500l-5.500-5z" fill="#f0c04b" stroke="#8f6c20" /><path d="M10.500 5v11M13.500 5v13M16 5v11" stroke="#fff2b5" />
        <rect x="29.500" y="4.500" width="14" height="14" fill="#19a8a8" stroke="#0c6c73" /><path d="M31 12q5.500-6 11 0-5.500 5-11 0z" fill="#eee" stroke="#111" /><circle cx="36.500" cy="11.700" r="2" />
        <circle cx="60.500" cy="12" r="7.500" fill="#e3e3ef" stroke="#777b8c" /><path d="M60.500 12L56 6a7 7 0 0 1 5-1.500z" fill="#b7b4e1" /><path d="M60.500 12l5 5.500a7 7 0 0 1-6 1.500z" fill="#c3e0cc" /><circle cx="60.500" cy="12" r="1.700" fill="#444" />
        <path d="M77 5h14v3H80v11h-2z" fill="#0c55a8" /><rect x="80" y="7" width="12" height="12" fill="#1d70d1" stroke="#0b3f86" /><path d="M83 13h6M86 10v6M84 11l4 4M88 11l-4 4" stroke="#8fd0ff" />
        <circle cx="108" cy="11" r="7" fill="#6a6a6f" stroke="#3c3c40" /><path d="M104 8h7v2h-5v6h-2z" fill="#fff" />
        <circle cx="112" cy="15" r="5" fill="#cc2f2a" stroke="#8d1714" /><path d="M110 13l4 4M114 13l-4 4" stroke="#fff" strokeWidth="1.500" />
        <g fill="none" stroke="#e5eaf1"><path d="M127 7q-4 5 0 10M130 5q2-2 4 0M137 7q4 5 0 10" strokeDasharray="2 1" /><path d="M132 9v9M129 18h6" stroke="#b9525a" /></g>
        <path d="M174.500 4v15" stroke="#fff" strokeWidth="1.500" /><path d="M176 5q4-2 5 1t6 0v8q-5 1-6-1t-5 0z" fill="#eef1f5" stroke="#444f60" strokeWidth=".6" />
        <circle cx="184" cy="15" r="5" fill="#d32f2c" stroke="#8d1714" /><path d="M182 13l4 4M186 13l-4 4" stroke="#fff" strokeWidth="1.500" />
        <path d="M206 6h-7v12.500h7" fill="none" stroke="#fff" strokeWidth="2" /><path d="M203 9.500h9v3q0 3-3 3h-2q-4 0-4-3zM205 5.500h2v4h-2zM209 5.500h2v4h-2zM207 15h2v5h-2z" fill="#fff" stroke="#3d4857" strokeWidth=".5" />
        <path d="M222 15h2v3h-2zM225 13h2v5h-2zM228 11h2v7h-2zM231 8h2v10h-2zM234 5h2v13h-2z" fill="#f9fbfd" stroke="#4b586b" strokeWidth=".5" />
        <path d="M249 9h3l5-4v14l-5-4h-3z" fill="#f9fbfd" stroke="#47525f" strokeWidth=".7" />
      </svg>
      <div className="flex w-[90px] flex-col items-center text-[12px] leading-[17px] text-white">
        <Fit w={28}>15:33</Fit>
        <Fit w={58}>07/02/2013</Fit>
      </div>
      <div className="ml-auto h-[39px] w-[14px] shrink-0 border border-[#34445a] bg-gradient-to-br from-[#a8b7c8] via-[#7f91a8] to-[#9badc1]" />
    </div>
  );
}

export default function App() {
  return (
    <div className="relative flex h-[768px] w-[1280px] flex-col overflow-hidden font-['Open_Sans',sans-serif]">
      <TitleBar />
      <TabBar />
      <Ribbon />
      <FormulaBar />
      <Sheet />
      <SheetTabs />
      <StatusBar />
      <Taskbar />
      <div className="absolute left-0 top-[1px]"><OfficeOrb /></div>
      <div className="absolute left-[931px] top-[446px] flex h-[53px] w-[205px] flex-col rounded-[2px] border border-[#767676] bg-gradient-to-b from-white to-[#cad9ef] pl-[3px] text-[12px] leading-[17px] text-[#4c4c4c] shadow-[3px_3px_2px_#0005]">
        <Fit w={132} className="font-bold">Nombre de Ed Scanning</Fit>
        <Fit w={118}>Valeur : Aucune valeur</Fit>
        <Fit w={197}>Ligne : 00/01/1900 - PAS POUR NOUS</Fit>
      </div>
    </div>
  );
}
